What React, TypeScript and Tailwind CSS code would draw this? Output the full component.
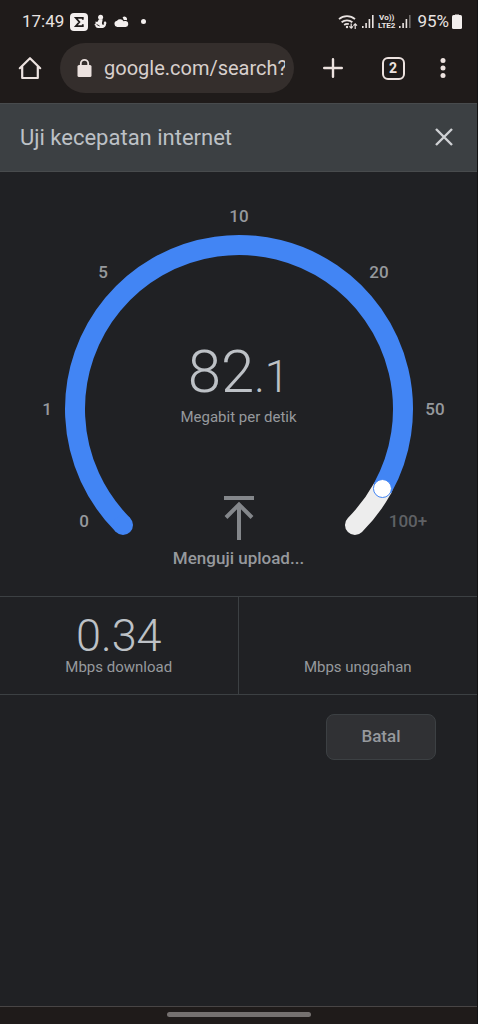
const ticks = [
  { label: '0', x: 84, y: 355 },
  { label: '1', x: 47, y: 243 },
  { label: '5', x: 103, y: 106 },
  { label: '10', x: 239, y: 50 },
  { label: '20', x: 379, y: 106 },
  { label: '50', x: 435, y: 243 },
  { label: '100+', x: 408, y: 355, dim: true },
];

const stats = [
  { value: '0.34', label: 'Mbps download' },
  { value: '', label: 'Mbps unggahan' },
];

const CX = 239;
const CY = 237;
const R = 164;

// angle in degrees, clockwise from 3 o'clock
const point = (deg: number) => {
  const rad = (deg * Math.PI) / 180;
  return { x: CX + R * Math.cos(rad), y: CY + R * Math.sin(rad) };
};

const arc = (from: number, to: number) => {
  const a = point(from);
  const b = point(to);
  return `M${a.x} ${a.y}A${R} ${R} 0 ${to - from > 180 ? 1 : 0} 1 ${b.x} ${b.y}`;
};

const SignalIcon = ({ weak = false }: { weak?: boolean }) => (
  <svg viewBox="0 0 12 13" className="w-[12px] h-[13px]" fill="#e9e3e1">
    <rect x="0" y="11" width="1.600" height="2" />
    <rect x="3.300" y="8" width="1.600" height="5" />
    <rect x="6.600" y="4" width="1.600" height="9" />
    <rect x="10" y="0" width="1.600" height="13" opacity={weak ? 0.4 : 1} />
  </svg>
);

const StatusBar = () => (
  <div className="h-[43px] pl-[22px] pr-[15px] flex items-center text-[17px] text-[#e9e3e1]">
    <span>17:49</span>
    <svg viewBox="0 0 18 18" className="ml-[6px] w-[18px] h-[18px]">
      <rect width="18" height="18" rx="4" fill="#f3efee" />
      <path d="M12.800 6.800V4.800H5.800L9.400 9 5.800 13.200h7v-2" fill="none" stroke="#1f1b1a" strokeWidth="1.800" />
    </svg>
    <svg viewBox="0 0 13 15" className="ml-[6px] w-[13px] h-[15px]" fill="#f3efee">
      <circle cx="6.600" cy="3.200" r="2.500" />
      <path d="M5 5.200h3.400c.4 1.200-.2 2.200-.4 3.200-.2 1.400.4 2.300 1.300 2.300.7 0 1-.6.800-1.200l-.7-.3L11 7l1.800 2.300-.8.200c.3 2.700-1.500 4.500-4.200 4.500H4.200C2.400 14 1.200 12.800 1.300 11.200L.2 11l1.400-1.500L1.500 7.600l1.800.4Z" />
      <path d="M2.600 10.400 5.600 12" stroke="#1f1b1a" strokeWidth="0.900" />
    </svg>
    <svg viewBox="0 0 15 12" className="ml-[7px] w-[15px] h-[12px]" fill="#f3efee">
      <path d="M3.200 11a3.200 3.200 0 0 1-.2-6.300A3.900 3.900 0 0 1 9.500 5.300a3 3 0 0 1 2.500-.2 3 3 0 0 1-.4 5.900Z" />
      <path d="M8.600 1.400a2.600 2.600 0 0 1 4.200 2.900c-1-.4-2-.4-2.900-.1-.3-1.200-.8-2-1.300-2.800Z" />
    </svg>
    <span className="ml-3 w-[5px] h-[5px] rounded-full bg-[#f3efee]" />

    <div className="ml-auto flex items-center">
      <svg viewBox="0 0 20 16" className="w-[20px] h-[16px]" fill="none" stroke="#e9e3e1" strokeWidth="1.800">
        <path d="M1 5.200a12 12 0 0 1 16 0M3.600 8.300a8.400 8.400 0 0 1 10.800 0M6.200 11a4.600 4.600 0 0 1 4.600-.8" />
        <circle cx="9" cy="13" r="1.200" fill="#e9e3e1" stroke="none" />
        <path d="M13.200 9.500v4.500M11.400 12.400l1.800 1.800 1.800-1.800M17.200 15V10M15.400 11.600l1.800-1.800L19 11.600" strokeWidth="1.200" />
      </svg>
      <span className="ml-1"><SignalIcon /></span>
      <span className="ml-1 flex flex-col items-center text-[8px] leading-[8px] font-bold">
        <span>Vo))</span>
        <span>LTE2</span>
      </span>
      <span className="ml-1"><SignalIcon weak /></span>
      <span className="ml-[6px]">95%</span>
      <svg viewBox="0 0 10 15" className="ml-[3px] w-[10px] h-[15px]">
        <path d="M3 0h4v2H3z" fill="#8b8685" />
        <rect y="1" width="10" height="14" rx="1.500" fill="#f3efee" />
      </svg>
    </div>
  </div>
);

const Toolbar = () => (
  <div className="pb-[10px] pr-[14px] flex items-center text-[#ece2df]">
    <button aria-label="Home" className="w-[60px] h-[50px] flex items-center justify-center">
      <svg viewBox="0 0 24 24" className="w-6 h-6" fill="none" stroke="currentColor" strokeWidth="2.200" strokeLinejoin="round" strokeLinecap="round">
        <path d="M1.800 12.200 12 2.200l10.200 10M4.200 10.500V22h15.600V10.500" />
      </svg>
    </button>
    <label className="flex-1 min-w-0 h-[50px] pl-[17px] pr-[9px] rounded-full bg-[#342e2c] flex items-center">
      <svg viewBox="0 0 15 19" className="w-[15px] h-[19px] shrink-0" fill="currentColor">
        <rect x="0.500" y="6" width="14" height="12" rx="1.500" />
        <path d="M3.800 7V4.600a3.700 3.700 0 0 1 7.400 0V7" fill="none" stroke="currentColor" strokeWidth="1.800" />
      </svg>
      <span className="sr-only">Address</span>
      <input
        readOnly
        value="google.com/search?"
        className="ml-3 flex-1 min-w-0 bg-transparent outline-none text-[20px] text-[#d8d0cd]"
      />
    </label>
    <button aria-label="New tab" className="ml-[9px] w-[60px] h-[50px] flex items-center justify-center">
      <svg viewBox="0 0 20 20" className="w-5 h-5" fill="none" stroke="currentColor" strokeWidth="2.400" strokeLinecap="round">
        <path d="M10 1.200v17.600M1.200 10h17.600" />
      </svg>
    </button>
    <button aria-label="Tabs" className="w-[60px] h-[50px] flex items-center justify-center">
      <span className="w-[23px] h-[23px] rounded-[6px] border-2 border-[#ece2df] flex items-center justify-center text-[14px] leading-none font-bold">
        2
      </span>
    </button>
    <button aria-label="Menu" className="w-10 h-[50px] flex items-center justify-center">
      <svg viewBox="0 0 6 20" className="w-[6px] h-5" fill="currentColor">
        <circle cx="3" cy="2.500" r="2.500" />
        <circle cx="3" cy="10" r="2.500" />
        <circle cx="3" cy="17.500" r="2.500" />
      </svg>
    </button>
  </div>
);

const Gauge = () => {
  const knob = point(29);
  return (
    <section className="grid">
      <svg viewBox="0 0 477 424" className="col-start-1 row-start-1 w-full" fill="none">
        <path d={arc(29, 45)} stroke="#ededed" strokeWidth="20" strokeLinecap="round" />
        <path d={arc(135, 389)} stroke="#4285f4" strokeWidth="20" />
        <circle cx={point(135).x} cy={point(135).y} r="10" fill="#4285f4" />
        <circle cx={knob.x} cy={knob.y} r="9" fill="#fff" stroke="#4285f4" />
        {ticks.map((t) => (
          <text
            key={t.label}
            x={t.x}
            y={t.y}
            textAnchor="middle"
            className={`text-[17px] font-medium ${t.dim ? 'fill-[#5f6165]' : 'fill-[#96999d]'}`}
          >
            {t.label}
          </text>
        ))}
      </svg>
      <div className="col-start-1 row-start-1 pt-[170px] flex flex-col items-center">
        <p className="text-[60px] leading-[60px] font-light text-[#bdc1c6]">
          82<span className="text-[44px]">.1</span>
        </p>
        <p className="text-[15px] leading-5 text-[#96999d]">Megabit per detik</p>
        <svg viewBox="0 0 30 44" className="mt-[69px] w-[30px] h-[44px]" fill="none" stroke="#84878b" strokeWidth="4">
          <path d="M0 2h30M15 44V9M2 21.500 15 8.500l13 13" />
        </svg>
        <p className="mt-2 text-[17px] leading-5 font-medium text-[#96999d]">Menguji upload...</p>
      </div>
    </section>
  );
};

const App = () => (
  <div className="min-h-screen flex flex-col bg-[#202124] border-r border-[#131314] font-['Roboto',sans-serif]">
    <header className="bg-[#1f1b1a]">
      <StatusBar />
      <Toolbar />
    </header>

    <main className="flex-1">
      <div className="h-[69px] pl-5 pr-[23px] flex items-center justify-between bg-[#3c4043] border-y border-[#484b4d]">
        <h1 className="text-[22px] text-[#bdc1c6]">Uji kecepatan internet</h1>
        <button aria-label="Tutup" className="text-[#cfd1d4]">
          <svg viewBox="0 0 20 20" className="w-5 h-5" fill="none" stroke="currentColor" strokeWidth="2.400">
            <path d="M2 1l16 16M18 1 2 17" />
          </svg>
        </button>
      </div>

      <Gauge />

      <section className="grid grid-cols-2 divide-x divide-[#3c4043] border-y border-[#3c4043]">
        {stats.map((s) => (
          <div key={s.label} className="h-[97px] pt-[18px] flex flex-col items-center">
            <p className="h-[42px] text-[45px] leading-[42px] font-light text-[#bdc1c6]">{s.value}</p>
            <p className="text-[15px] leading-5 text-[#96999d]">{s.label}</p>
          </div>
        ))}
      </section>

      <div className="pt-[19px] pr-[41px] flex justify-end">
        <button className="w-[110px] h-[46px] rounded-lg bg-[#303134] border border-[#3c4043] text-[17px] font-medium text-[#96999d]">
          Batal
        </button>
      </div>
    </main>

    <footer className="h-[18px] pt-[5px] bg-[#1f1b1a] border-t border-[#484545] flex justify-center">
      <span className="w-[144px] h-[5px] rounded-full bg-[#757170]" />
    </footer>
  </div>
);

export default App;
